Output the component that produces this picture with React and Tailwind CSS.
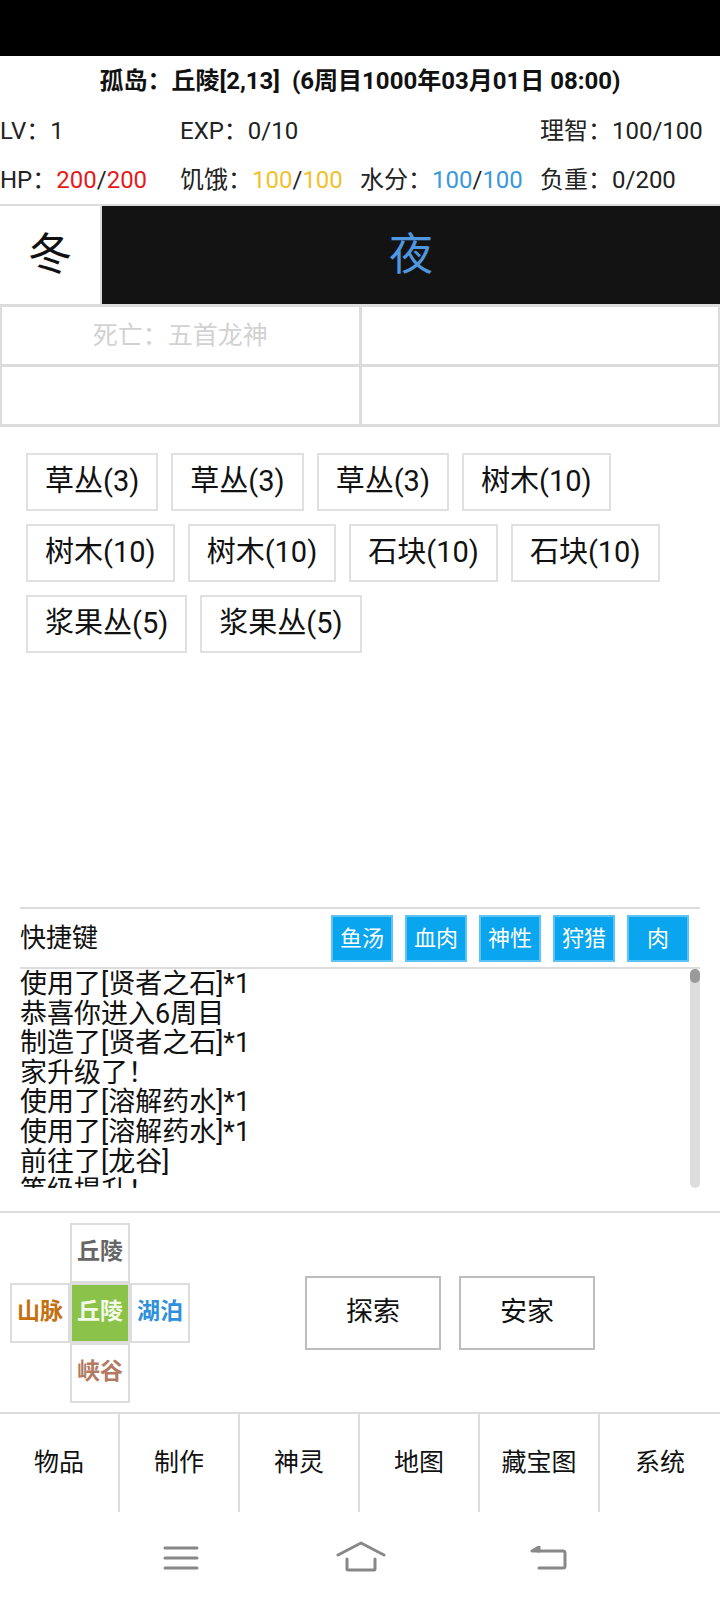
import React from 'react';

const resources = ['草丛(3)', '草丛(3)', '草丛(3)', '树木(10)', '树木(10)', '树木(10)', '石块(10)', '石块(10)', '浆果丛(5)', '浆果丛(5)'];
const shortcuts = ['鱼汤', '血肉', '神性', '狩猎', '肉'];
const logs = ['使用了[贤者之石]*1', '恭喜你进入6周目', '制造了[贤者之石]*1', '家升级了！', '使用了[溶解药水]*1', '使用了[溶解药水]*1', '前往了[龙谷]', '等级提升！'];
const tabs = ['物品', '制作', '神灵', '地图', '藏宝图', '系统'];

const Stat = ({ label, value, color }) => (
  <div className="whitespace-nowrap">
    {label}：
    {color ? (
      <>
        <span className={color}>{value}</span>/<span className={color}>{value}</span>
      </>
    ) : (
      value
    )}
  </div>
);

const App = () => {
  return (
    <div className="w-[720px] h-[1600px] bg-white overflow-hidden flex flex-col text-[#111] font-['Roboto','Noto_Sans_CJK_SC',sans-serif]">
      {/* status bar */}
      <div className="h-[56px] bg-black shrink-0"></div>

      {/* title */}
      <div className="h-[50px] flex items-center justify-center text-[24px] font-bold whitespace-pre">
        孤岛：丘陵[2,13]  (6周目1000年03月01日 08:00)
      </div>

      {/* stats */}
      <div className="grid grid-cols-4 h-[50px] items-center text-[24px] text-[#222]">
        <div>LV：1</div>
        <div>EXP：0/10</div>
        <div></div>
        <div>理智：100/100</div>
      </div>
      <div className="grid grid-cols-4 h-[48px] items-center text-[24px] text-[#222]">
        <Stat label="HP" value="200" color="text-[#e31b1b]" />
        <Stat label="饥饿" value="100" color="text-[#f2c12e]" />
        <Stat label="水分" value="100" color="text-[#3a98dc]" />
        <Stat label="负重" value="0/200" />
      </div>

      {/* season */}
      <div className="flex h-[102px] border-y-2 border-[#dcdcdc]">
        <div className="w-[102px] flex items-center justify-center text-[44px] border-r-2 border-[#dcdcdc]">冬</div>
        <div className="flex-1 bg-[#131313] flex items-center justify-center text-[44px] text-[#4f98e0]">夜</div>
      </div>

      {/* effects grid */}
      <div className="grid grid-cols-2 gap-[3px] bg-[#dcdcdc] px-[2px] pt-[1px] pb-[3px]">
        <div className="h-[57px] bg-white flex items-center justify-center text-[25px] text-[#d2d2d2]">死亡：五首龙神</div>
        <div className="h-[57px] bg-white"></div>
        <div className="h-[57px] bg-white"></div>
        <div className="h-[57px] bg-white"></div>
      </div>

      {/* resources */}
      <div className="flex flex-wrap gap-x-[13px] gap-y-[13px] pl-[26px] pr-[40px] pt-[26px] h-[480px] content-start">
        {resources.map((r, i) => (
          <div key={i} className="h-[58px] px-[17px] flex items-center border-2 border-[#e0e0e0] text-[29px]">
            {r}
          </div>
        ))}
      </div>

      {/* shortcuts */}
      <div className="mx-[20px] border-t-2 border-[#dcdcdc]">
        <div className="h-[58px] flex items-center justify-between pr-[11px]">
          <div className="text-[26px]">快捷键</div>
          <div className="flex gap-[12px]">
            {shortcuts.map((s) => (
              <div key={s} className="w-[62px] h-[47px] bg-[#0aa5ef] text-white text-[22px] flex items-center justify-center border-2 border-[#5cc3f4]">
                {s}
              </div>
            ))}
          </div>
        </div>
      </div>
      <div className="mx-[20px] border-t-2 border-[#dcdcdc] flex h-[221px]">
        <div className="flex-1 overflow-hidden pt-[1px] text-[27px] leading-[29.6px]">
          {logs.map((l, i) => (
            <div key={i} className="whitespace-nowrap">{l}</div>
          ))}
        </div>
        <div className="w-[10px] h-[219px] bg-[#dddddd] rounded-full">
          <div className="w-[10px] h-[14px] bg-[#9a9a9a] rounded-full"></div>
        </div>
      </div>

      {/* movement */}
      <div className="mt-[23px] border-y-2 border-[#dcdcdc] h-[203px] flex items-center">
        <div className="ml-[10px] grid grid-cols-[60px_60px_60px] grid-rows-[60px_60px_60px] text-[23px] font-bold">
          <div></div>
          <div className="border-2 border-[#dddddd] flex items-center justify-center text-[#666]">丘陵</div>
          <div></div>
          <div className="border-2 border-[#dddddd] flex items-center justify-center text-[#c4700f]">山脉</div>
          <div className="border-2 border-[#dddddd] bg-[#8bc34a] flex items-center justify-center text-[#f4fae8]">丘陵</div>
          <div className="border-2 border-[#dddddd] flex items-center justify-center text-[#2f90dc]">湖泊</div>
          <div></div>
          <div className="border-2 border-[#dddddd] flex items-center justify-center text-[#b27a62]">峡谷</div>
          <div></div>
        </div>
        <div className="ml-[115px] flex gap-[18px]">
          <div className="w-[136px] h-[74px] border-2 border-[#bdbdbd] flex items-center justify-center text-[27px]">探索</div>
          <div className="w-[136px] h-[74px] border-2 border-[#bdbdbd] flex items-center justify-center text-[27px]">安家</div>
        </div>
      </div>

      {/* tabs */}
      <div className="grid grid-cols-6 h-[98px]">
        {tabs.map((t, i) => (
          <div key={t} className={`flex items-center justify-center text-[25px] ${i < 5 ? 'border-r-2 border-[#dddddd]' : ''}`}>
            {t}
          </div>
        ))}
      </div>

      {/* nav bar */}
      <div className="flex-1 relative">
        <svg className="absolute left-[163px] top-[33px]" width="36" height="26" viewBox="0 0 36 26" fill="none" stroke="#888" strokeWidth="3" strokeLinecap="round">
          <path d="M2 3H34M2 13H34M2 23H34" />
        </svg>
        <svg className="absolute left-[336px] top-[29px]" width="50" height="32" viewBox="0 0 50 32" fill="none" stroke="#888" strokeWidth="3" strokeLinecap="round" strokeLinejoin="round">
          <path d="M2 14L25 2L48 14" />
          <path d="M11 18V28Q11 29 12 29H38Q39 29 39 28V18" />
        </svg>
        <svg className="absolute left-[530px] top-[34px]" width="38" height="26" viewBox="0 0 38 26" fill="none" stroke="#888" strokeWidth="3" strokeLinecap="round" strokeLinejoin="round">
          <path d="M8 5H33Q35 5 35 7V20Q35 22 33 22H9" />
          <path d="M9 1L2 5L9 5Z" fill="#888" />
        </svg>
      </div>
    </div>
  );
};

export default App;
